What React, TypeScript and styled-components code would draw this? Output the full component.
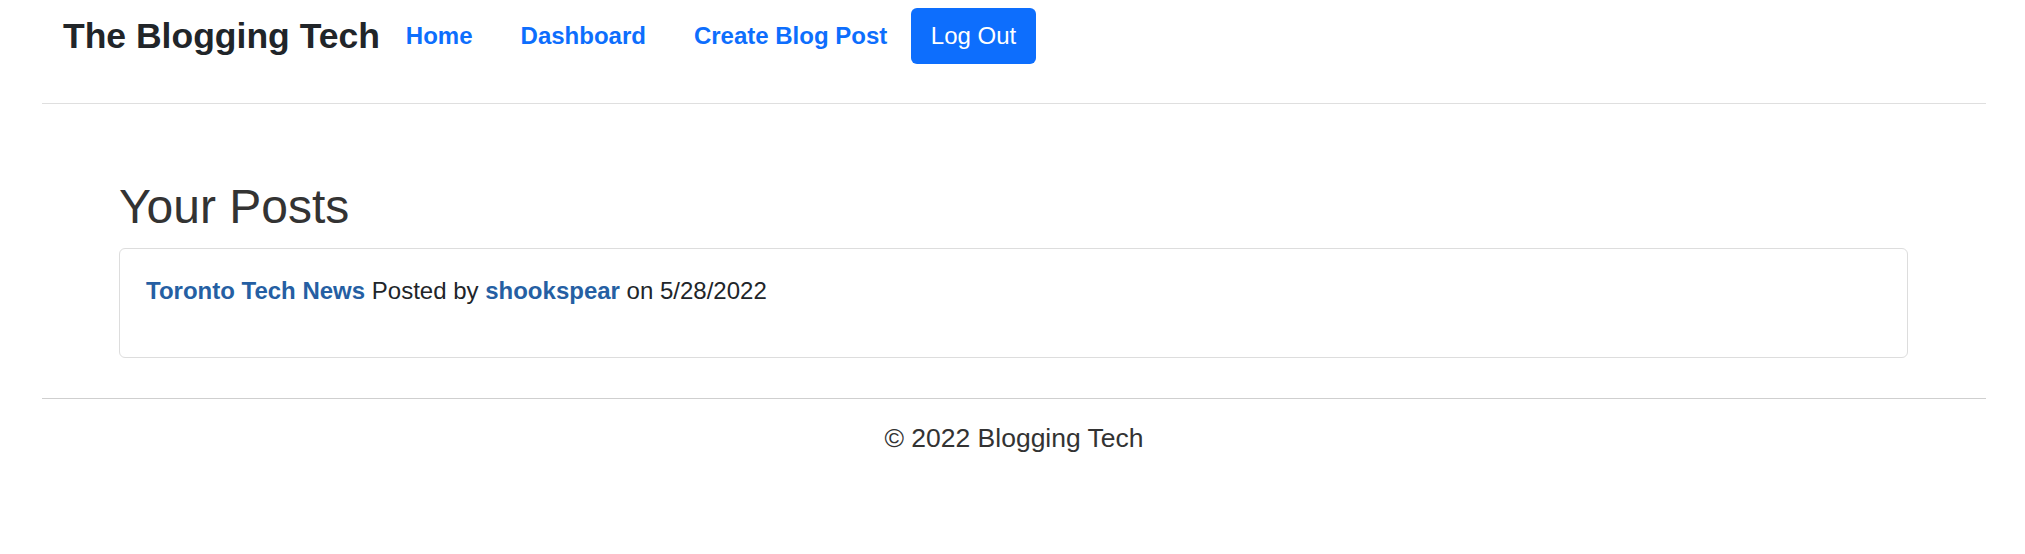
import * as React from "react";
import styled, { createGlobalStyle } from "styled-components";

const GlobalStyle = createGlobalStyle`
  html, body {
    margin: 0;
    padding: 0;
    background: #fff;
  }
  body {
    font-family: "Liberation Sans", Arial, sans-serif;
    color: #212529;
  }
`;

const Page = styled.div`
  padding: 0 39px 0 42px;
`;

const Header = styled.header`
  display: flex;
  align-items: center;
  height: 72px;
  padding: 0 21px 31px;
  border-bottom: 1px solid #dfdfdf;
`;

const Brand = styled.h1`
  margin: 0 2px 0 0;
  font-size: 35.5px;
  font-weight: 700;
  color: #212529;
  white-space: nowrap;
`;

const Nav = styled.nav`
  display: flex;
  align-items: center;
`;

const NavLink = styled.a`
  padding: 0 24px;
  font-size: 24px;
  font-weight: 700;
  color: #0d6efd;
  text-decoration: none;
  white-space: nowrap;
`;

const LogOutButton = styled.button`
  height: 56px;
  padding: 0 19.5px;
  border: none;
  border-radius: 6px;
  background: #0d6efd;
  color: #fff;
  font-family: "Liberation Sans", Arial, sans-serif;
  font-size: 24px;
  cursor: pointer;
`;

const Main = styled.main`
  padding: 75px 78px 40px 77px;
`;

const Heading = styled.h2`
  margin: 0 0 13px;
  font-size: 48px;
  font-weight: 400;
  line-height: 56px;
  color: #333;
`;

const Card = styled.div`
  border: 1px solid #dddddd;
  border-radius: 6px;
  padding: 24px 26px;
`;

const PostLine = styled.p`
  margin: 0 0 24px;
  font-size: 24px;
  line-height: 36px;
  color: #212529;
`;

const PostLink = styled.a`
  font-weight: 700;
  color: #255fa3;
  text-decoration: none;
`;

const Footer = styled.footer`
  border-top: 1px solid #cfcfcf;
  padding-top: 19px;
  text-align: center;
  font-size: 26.5px;
  line-height: 40px;
  color: #333;
`;

export default function App() {
  return (
    <Page>
      <GlobalStyle />
      <Header>
        <Brand>The Blogging Tech</Brand>
        <Nav>
          <NavLink href="#">Home</NavLink>
          <NavLink href="#">Dashboard</NavLink>
          <NavLink href="#">Create Blog Post</NavLink>
          <LogOutButton>Log Out</LogOutButton>
        </Nav>
      </Header>
      <Main>
        <Heading>Your Posts</Heading>
        <Card>
          <PostLine>
            <PostLink href="#">Toronto Tech News</PostLink> Posted by{" "}
            <PostLink href="#">shookspear</PostLink> on 5/28/2022
          </PostLine>
        </Card>
      </Main>
      <Footer>© 2022 Blogging Tech</Footer>
    </Page>
  );
}
